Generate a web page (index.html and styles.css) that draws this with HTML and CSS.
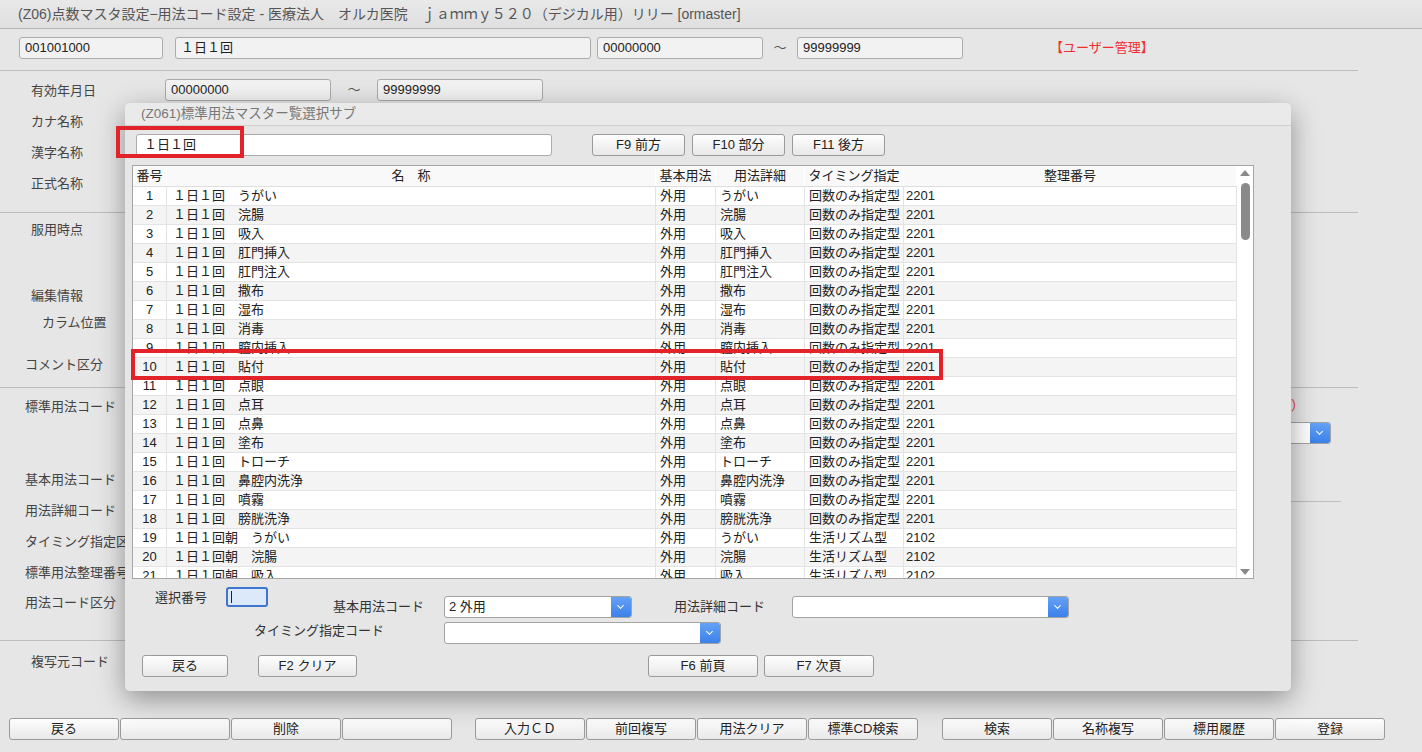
FILE: index.html
```html
<!DOCTYPE html>
<html lang="ja">
<head>
    <meta charset="UTF-8">
    <meta name="viewport" content="width=device-width, initial-scale=1.0">
    <title>用法コード設定</title>
    <link rel="stylesheet" href="styles.css">
</head>
<body>
    <div class="titlebar">(Z06)点数マスタ設定−用法コード設定 - 医療法人　オルカ医院　ｊａｍｍｙ５２０（デジカル用）リリー [ormaster]</div>

    <div class="page">
        <section class="sec sec-head">
            <div class="field w144">001001000</div>
            <div class="field w416 ml12">１日１回</div>
            <div class="field w166 ml6">00000000</div>
            <span class="tilde">～</span>
            <div class="field w166">99999999</div>
            <span class="user">【ユーザー管理】</span>
        </section>

        <section class="sec sec-names">
            <div class="frow">
                <span class="lbl">有効年月日</span>
                <div class="field w166">00000000</div>
                <span class="tilde wide">～</span>
                <div class="field w166">99999999</div>
            </div>
            <div class="frow"><span class="lbl">カナ名称</span></div>
            <div class="frow"><span class="lbl">漢字名称</span></div>
            <div class="frow"><span class="lbl">正式名称</span></div>
        </section>

        <section class="sec sec-edit">
            <p class="plain l31 mt8">服用時点</p>
            <p class="plain l31 mt48">編集情報</p>
            <p class="plain l42 mt9">カラム位置</p>
            <p class="plain l25 mt24">コメント区分</p>
        </section>

        <section class="sec sec-std">
            <div class="std-labels">
                <p class="plain l25 mt10">標準用法コード</p>
                <p class="plain l25 mt55">基本用法コード</p>
                <p class="plain l25 mt13">用法詳細コード</p>
                <p class="plain l25 mt13">タイミング指定区分</p>
                <p class="plain l25 mt13">標準用法整理番号</p>
                <p class="plain l25 mt12">用法コード区分</p>
            </div>
            <div class="std-side">
                <p class="req">（入力必須）</p>
                <div class="select w180"><span class="select-btn"></span></div>
                <div class="side-line"></div>
            </div>
        </section>

        <section class="sec-copy">
            <p class="plain l31 mt12">複写元コード</p>
        </section>

        <footer class="fkeys">
            <div class="fgroup">
                <button class="btn fk">戻る</button>
                <button class="btn fk"></button>
                <button class="btn fk">削除</button>
                <button class="btn fk"></button>
            </div>
            <div class="fgroup">
                <button class="btn fk">入力ＣＤ</button>
                <button class="btn fk">前回複写</button>
                <button class="btn fk">用法クリア</button>
                <button class="btn fk">標準CD検索</button>
            </div>
            <div class="fgroup">
                <button class="btn fk">検索</button>
                <button class="btn fk">名称複写</button>
                <button class="btn fk">標用履歴</button>
                <button class="btn fk">登録</button>
            </div>
        </footer>
    </div>

    <div class="dialog">
        <div class="dlg-title">(Z061)標準用法マスター覧選択サブ</div>

        <div class="dlg-search">
            <div class="field white w416">１日１回</div>
            <button class="btn w93 ml40">F9 前方</button>
            <button class="btn w93 ml7">F10 部分</button>
            <button class="btn w93 ml7">F11 後方</button>
        </div>

        <div class="grid">
            <div class="grid-main">
                <div class="row head">
                    <span class="c num">番号</span><span class="c mid">名　称</span><span class="c mid">基本用法</span><span class="c mid">用法詳細</span><span class="c mid">タイミング指定</span><span class="c mid">整理番号</span>
                </div>
                <div class="row"><span class="c num">1</span><span class="c name">１日１回　うがい</span><span class="c">外用</span><span class="c">うがい</span><span class="c">回数のみ指定型</span><span class="c">2201</span></div>
                <div class="row"><span class="c num">2</span><span class="c name">１日１回　浣腸</span><span class="c">外用</span><span class="c">浣腸</span><span class="c">回数のみ指定型</span><span class="c">2201</span></div>
                <div class="row"><span class="c num">3</span><span class="c name">１日１回　吸入</span><span class="c">外用</span><span class="c">吸入</span><span class="c">回数のみ指定型</span><span class="c">2201</span></div>
                <div class="row"><span class="c num">4</span><span class="c name">１日１回　肛門挿入</span><span class="c">外用</span><span class="c">肛門挿入</span><span class="c">回数のみ指定型</span><span class="c">2201</span></div>
                <div class="row"><span class="c num">5</span><span class="c name">１日１回　肛門注入</span><span class="c">外用</span><span class="c">肛門注入</span><span class="c">回数のみ指定型</span><span class="c">2201</span></div>
                <div class="row"><span class="c num">6</span><span class="c name">１日１回　撒布</span><span class="c">外用</span><span class="c">撒布</span><span class="c">回数のみ指定型</span><span class="c">2201</span></div>
                <div class="row"><span class="c num">7</span><span class="c name">１日１回　湿布</span><span class="c">外用</span><span class="c">湿布</span><span class="c">回数のみ指定型</span><span class="c">2201</span></div>
                <div class="row"><span class="c num">8</span><span class="c name">１日１回　消毒</span><span class="c">外用</span><span class="c">消毒</span><span class="c">回数のみ指定型</span><span class="c">2201</span></div>
                <div class="row"><span class="c num">9</span><span class="c name">１日１回　膣内挿入</span><span class="c">外用</span><span class="c">膣内挿入</span><span class="c">回数のみ指定型</span><span class="c">2201</span></div>
                <div class="row"><span class="c num">10</span><span class="c name">１日１回　貼付</span><span class="c">外用</span><span class="c">貼付</span><span class="c">回数のみ指定型</span><span class="c">2201</span></div>
                <div class="row"><span class="c num">11</span><span class="c name">１日１回　点眼</span><span class="c">外用</span><span class="c">点眼</span><span class="c">回数のみ指定型</span><span class="c">2201</span></div>
                <div class="row"><span class="c num">12</span><span class="c name">１日１回　点耳</span><span class="c">外用</span><span class="c">点耳</span><span class="c">回数のみ指定型</span><span class="c">2201</span></div>
                <div class="row"><span class="c num">13</span><span class="c name">１日１回　点鼻</span><span class="c">外用</span><span class="c">点鼻</span><span class="c">回数のみ指定型</span><span class="c">2201</span></div>
                <div class="row"><span class="c num">14</span><span class="c name">１日１回　塗布</span><span class="c">外用</span><span class="c">塗布</span><span class="c">回数のみ指定型</span><span class="c">2201</span></div>
                <div class="row"><span class="c num">15</span><span class="c name">１日１回　トローチ</span><span class="c">外用</span><span class="c">トローチ</span><span class="c">回数のみ指定型</span><span class="c">2201</span></div>
                <div class="row"><span class="c num">16</span><span class="c name">１日１回　鼻腔内洗浄</span><span class="c">外用</span><span class="c">鼻腔内洗浄</span><span class="c">回数のみ指定型</span><span class="c">2201</span></div>
                <div class="row"><span class="c num">17</span><span class="c name">１日１回　噴霧</span><span class="c">外用</span><span class="c">噴霧</span><span class="c">回数のみ指定型</span><span class="c">2201</span></div>
                <div class="row"><span class="c num">18</span><span class="c name">１日１回　膀胱洗浄</span><span class="c">外用</span><span class="c">膀胱洗浄</span><span class="c">回数のみ指定型</span><span class="c">2201</span></div>
                <div class="row"><span class="c num">19</span><span class="c name">１日１回朝　うがい</span><span class="c">外用</span><span class="c">うがい</span><span class="c">生活リズム型</span><span class="c">2102</span></div>
                <div class="row"><span class="c num">20</span><span class="c name">１日１回朝　浣腸</span><span class="c">外用</span><span class="c">浣腸</span><span class="c">生活リズム型</span><span class="c">2102</span></div>
                <div class="row"><span class="c num">21</span><span class="c name">１日１回朝　吸入</span><span class="c">外用</span><span class="c">吸入</span><span class="c">生活リズム型</span><span class="c">2102</span></div>
            </div>
            <div class="scrollbar">
                <svg class="arrow" width="10" height="6" viewBox="0 0 10 6"><path d="M0 6 L5 0 L10 6 Z" fill="#8a8a8a"/></svg>
                <div class="thumb"></div>
                <svg class="arrow down" width="10" height="6" viewBox="0 0 10 6"><path d="M0 0 L5 6 L10 0 Z" fill="#8a8a8a"/></svg>
            </div>
        </div>

        <div class="dlg-row row-a">
            <span class="dlbl w71 mt2">選択番号</span>
            <div class="pick"><span class="caret"></span></div>
            <span class="dlbl w111 ml65 mt11">基本用法コード</span>
            <div class="select w188 mt9"><span class="val">2 外用</span><span class="select-btn"></span></div>
            <span class="dlbl w118 ml42 mt11">用法詳細コード</span>
            <div class="select w277 mt9"><span class="select-btn"></span></div>
        </div>
        <div class="dlg-row row-b">
            <span class="dlbl w190 ml129">タイミング指定コード</span>
            <div class="select w277"><span class="select-btn"></span></div>
        </div>
        <div class="dlg-row row-c">
            <button class="btn w86 ml17">戻る</button>
            <button class="btn w99 ml30">F2 クリア</button>
            <button class="btn w110 ml291">F6 前頁</button>
            <button class="btn w110 ml6">F7 次頁</button>
        </div>

        <div class="mark mark-search"></div>
        <div class="mark mark-row"></div>
    </div>
</body>
</html>
```

FILE: styles.css
```css
body {
    margin: 0;
    width: 1422px;
    height: 752px;
    overflow: hidden;
    position: relative;
    background-color: #e6e6e6;
    color: #333;
    font-family: "Liberation Sans", "Noto Sans CJK JP", sans-serif;
    font-size: 13px;
}
p {
    margin: 0;
}
.titlebar {
    height: 28px;
    line-height: 28px;
    padding-left: 18px;
    background: linear-gradient(#e9e9e9, #dfdfdf);
    border-bottom: 1px solid #b4b4b4;
    color: #555;
    font-size: 14px;
    white-space: nowrap;
}
.page {
    height: 723px;
    display: flex;
    flex-direction: column;
}
.sec {
    width: 1358px;
    border-bottom: 1px solid #bdbdbd;
}
.sec-head {
    height: 42px;
    box-sizing: border-box;
    padding: 8px 0 0 19px;
    display: flex;
    align-items: flex-start;
}
.field {
    height: 22px;
    line-height: 20px;
    box-sizing: border-box;
    padding: 0 5px;
    border: 1px solid #ababab;
    border-radius: 3px;
    background-color: #f2f2f2;
    color: #222;
    white-space: nowrap;
}
.field.white {
    background-color: #fff;
    padding-left: 7px;
}
.w144 { width: 144px; }
.w416 { width: 416px; }
.w166 { width: 166px; }
.w180 { width: 180px; }
.w188 { width: 188px; }
.w277 { width: 277px; }
.w93 { width: 93px; }
.w86 { width: 86px; }
.w99 { width: 99px; }
.w110 { width: 110px; }
.w71 { width: 71px; }
.w111 { width: 111px; }
.w118 { width: 118px; }
.w190 { width: 190px; }
.ml6 { margin-left: 6px; }
.ml7 { margin-left: 7px; }
.ml12 { margin-left: 12px; }
.ml17 { margin-left: 17px; }
.ml30 { margin-left: 30px; }
.ml40 { margin-left: 40px; }
.ml42 { margin-left: 42px; }
.ml65 { margin-left: 65px; }
.ml129 { margin-left: 129px; }
.ml291 { margin-left: 291px; }
.mt2 { margin-top: 2px; }
.mt8 { margin-top: 8px; }
.mt9 { margin-top: 9px; }
.mt10 { margin-top: 10px; }
.mt11 { margin-top: 11px; }
.mt12 { margin-top: 12px; }
.mt13 { margin-top: 13px; }
.mt24 { margin-top: 24px; }
.mt48 { margin-top: 48px; }
.mt55 { margin-top: 55px; }
.tilde {
    width: 34px;
    text-align: center;
    line-height: 22px;
    color: #555;
}
.tilde.wide {
    width: 46px;
}
.user {
    margin-left: 87px;
    line-height: 22px;
    color: #f03030;
}
.sec-names {
    height: 142px;
    box-sizing: border-box;
    padding-top: 3px;
}
.frow {
    height: 31px;
    display: flex;
    align-items: center;
}
.lbl {
    width: 134px;
    padding-left: 31px;
    color: #444;
}
.plain {
    line-height: 18px;
    color: #444;
    white-space: nowrap;
}
.l25 { padding-left: 25px; }
.l31 { padding-left: 31px; }
.l42 { padding-left: 42px; }
.sec-edit {
    height: 175px;
    box-sizing: border-box;
}
.sec-std {
    height: 253px;
    box-sizing: border-box;
    display: flex;
}
.std-labels {
    flex: 1;
}
.std-side {
    width: 190px;
    margin-right: 17px;
    padding-top: 9px;
}
.req {
    line-height: 18px;
    text-align: right;
    padding-right: 37px;
    color: #f03030;
}
.std-side .select {
    margin-top: 7px;
}
.side-line {
    margin-top: 57px;
    border-top: 1px solid #bdbdbd;
}
.select {
    height: 22px;
    box-sizing: border-box;
    border: 1px solid #a3a3a3;
    border-radius: 3px;
    background-color: #fff;
    display: flex;
    overflow: hidden;
}
.select .val {
    flex: 1;
    padding-left: 4px;
    line-height: 20px;
    color: #222;
}
.select-btn {
    margin-left: auto;
    width: 20px;
    height: 100%;
    background: linear-gradient(#64a2f7, #3c80ea);
    position: relative;
}
.select-btn::after {
    content: "";
    position: absolute;
    left: 7px;
    top: 6px;
    width: 4px;
    height: 4px;
    border-right: 1.5px solid #fff;
    border-bottom: 1.5px solid #fff;
    transform: rotate(45deg);
}
.sec-copy {
    flex: 1;
}
.fkeys {
    display: flex;
    padding: 0 0 12px 9px;
    gap: 23px;
}
.fgroup {
    display: flex;
    gap: 1px;
}
.fgroup + .fgroup + .fgroup {
    margin-left: 1px;
}
.btn {
    height: 22px;
    padding: 0;
    box-sizing: border-box;
    border: 1px solid #9a9a9a;
    border-radius: 3px;
    background: linear-gradient(#fefefe, #e8e8e8);
    color: #222;
    font-family: "Liberation Sans", "Noto Sans CJK JP", sans-serif;
    font-size: 13px;
    line-height: 20px;
    cursor: pointer;
}
.fk {
    width: 110px;
}
.dialog {
    position: absolute;
    left: 125px;
    top: 103px;
    width: 1166px;
    height: 588px;
    background-color: #e6e6e6;
    border-radius: 5px;
    box-shadow: 0 8px 28px rgba(0, 0, 0, 0.38);
}
.dlg-title {
    height: 22px;
    line-height: 22px;
    padding-left: 16px;
    border-bottom: 1px solid #cfcfcf;
    border-radius: 5px 5px 0 0;
    background-color: #eaeaea;
    color: #777;
    font-size: 13.5px;
}
.dlg-search {
    display: flex;
    margin: 8px 0 0 11px;
}
.grid {
    margin: 9px 0 0 7px;
    width: 1122px;
    height: 414px;
    box-sizing: border-box;
    border: 1px solid #a6a6a6;
    background-color: #fff;
    display: flex;
}
.grid-main {
    width: 1104px;
    overflow: hidden;
}
.row {
    display: grid;
    grid-template-columns: 34px 489px 60px 89px 99px 1fr;
    height: 19px;
    box-sizing: border-box;
    border-bottom: 1px solid #e3e3e3;
    color: #222;
}
.row:nth-child(odd) {
    background-color: #f4f4f4;
}
.row.head {
    height: 21px;
    background-color: #f9f9f9;
    border-bottom: 1px solid #dedede;
}
.c {
    line-height: 18px;
    padding-left: 4px;
    border-right: 1px solid #e3e3e3;
    white-space: nowrap;
    overflow: hidden;
}
.c:last-child {
    padding-left: 2px;
}
.head .c {
    line-height: 20px;
    border-right-color: #fff;
}
.c.num, .c.mid {
    padding-left: 0;
    text-align: center;
}
.c.name {
    padding-left: 6px;
}
.scrollbar {
    flex: 1;
    display: flex;
    flex-direction: column;
    align-items: center;
    padding-top: 4px;
}
.thumb {
    margin-top: 7px;
    width: 9px;
    height: 57px;
    border-radius: 5px;
    background-color: #8a8a8a;
}
.arrow.down {
    margin-top: auto;
    margin-bottom: 3px;
}
.dlg-row {
    display: flex;
    align-items: flex-start;
}
.row-a {
    margin-top: 8px;
    height: 35px;
}
.dlbl {
    line-height: 18px;
    color: #333;
    white-space: nowrap;
}
.row-a .dlbl:first-child {
    margin-left: 30px;
}
.pick {
    width: 42px;
    height: 20px;
    box-sizing: border-box;
    border: 2px solid #3f74cf;
    border-radius: 3px;
    background-color: #dce9fb;
    position: relative;
}
.caret {
    position: absolute;
    left: 3px;
    top: 2px;
    width: 1px;
    height: 12px;
    background-color: #222;
}
.row-c {
    margin-top: 11px;
}
.mark {
    position: absolute;
    border: 4px solid #e3232a;
    box-sizing: border-box;
}
.mark-search {
    left: -9px;
    top: 23px;
    width: 128px;
    height: 32px;
}
.mark-row {
    left: 6px;
    top: 246px;
    width: 812px;
    height: 31px;
}
```
